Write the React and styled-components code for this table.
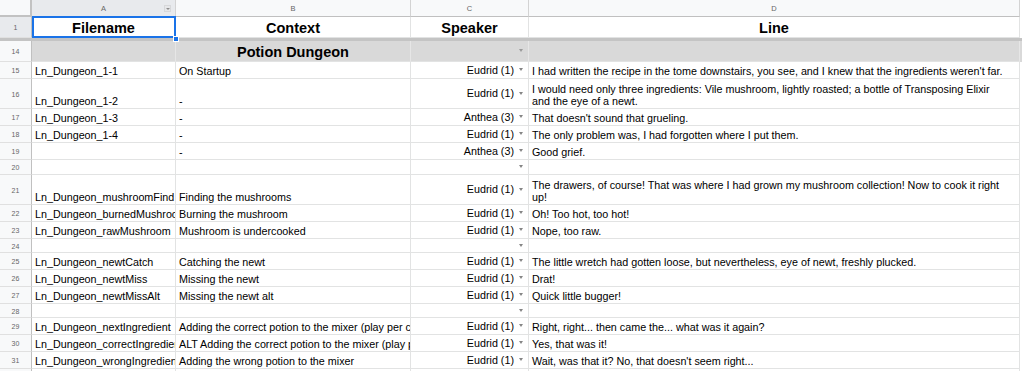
import React from 'react';
import styled, { createGlobalStyle } from 'styled-components';

const GlobalStyle = createGlobalStyle`
  html, body { margin: 0; padding: 0; background: #ffffff; }
  body {
    font-family: "Liberation Sans", Arial, sans-serif;
    overflow: hidden;
    width: 1022px;
    height: 371px;
  }
`;

const COLS = '32px 144px 235px 118px 491px';

const Sheet = styled.div`
  width: 1022px;
  display: flex;
  flex-direction: column;
`;

const Row = styled.div`
  display: grid;
  grid-template-columns: ${COLS};
  height: ${p => p.$h}px;
  flex: none;
  background: ${p => p.$bg || '#ffffff'};
`;

const Corner = styled.div`
  box-sizing: border-box;
  background: #f8f9fa;
  border-right: 2px solid #c2c2c2;
  border-bottom: 2px solid #c2c2c2;
`;

const ColHead = styled.div`
  box-sizing: border-box;
  position: relative;
  background: ${p => (p.$active ? '#e8eaed' : '#f8f9fa')};
  border-right: 1px solid #d3d3d3;
  border-bottom: 1px solid #c0c0c0;
  color: #666;
  font-size: 7.5px;
  display: flex;
  align-items: center;
  justify-content: center;
`;

const FilterBtn = styled.span`
  position: absolute;
  right: 4px;
  top: 5px;
  width: 7px;
  height: 7px;
  box-sizing: border-box;
  background: #e6e7e9;
  border: 1px solid #d7d8da;
  display: flex;
  align-items: center;
  justify-content: center;
  &::after {
    content: '';
    border-left: 2px solid transparent;
    border-right: 2px solid transparent;
    border-top: 2px solid #8d8d8d;
  }
`;

const RowNum = styled.div`
  box-sizing: border-box;
  background: ${p => (p.$active ? '#e8eaed' : '#f8f9fa')};
  border-right: 1px solid #c0c0c0;
  border-bottom: 1px solid #e0e0e0;
  color: #666;
  font-size: 7px;
  padding-top: 1px;
  display: flex;
  align-items: center;
  justify-content: center;
`;

const FreezeBar = styled.div`
  height: 3px;
  flex: none;
  background: #c4c4c4;
`;

const justify = { left: 'flex-start', center: 'center', right: 'flex-end' };

const Cell = styled.div`
  box-sizing: border-box;
  position: relative;
  min-width: 0;
  border-right: 1px solid ${p => p.$line || '#e2e3e3'};
  border-bottom: 1px solid #e2e3e3;
  padding: ${p => (p.$pad === 'speaker' ? '0 5px 1px 3px' : '0 3px 1px 3px')};
  display: flex;
  align-items: ${p => (p.$valign === 'middle' ? 'center' : 'flex-end')};
  justify-content: ${p => justify[p.$align || 'left']};
  font-size: ${p => (p.$big ? '14.5px' : '10.75px')};
  font-weight: ${p => (p.$big ? 700 : 400)};
  line-height: ${p => (p.$big ? '16px' : '12px')};
  color: #000;
  white-space: ${p => (p.$wrap ? 'normal' : 'nowrap')};
  overflow: ${p => (p.$selected ? 'visible' : 'hidden')};

  ${p =>
    p.$selected &&
    `
    &::after {
      content: '';
      position: absolute;
      left: 0;
      top: -1px;
      right: -1px;
      bottom: -1px;
      border: 2px solid #1a73e8;
      pointer-events: none;
      z-index: 2;
    }
  `}
`;

const Handle = styled.span`
  position: absolute;
  right: -4px;
  bottom: -5px;
  width: 6px;
  height: 6px;
  box-sizing: border-box;
  background: #1a73e8;
  border: 1px solid #ffffff;
  z-index: 3;
`;

const Speaker = styled.span`
  white-space: nowrap;
`;

const Arrow = styled.span`
  flex: none;
  width: 0;
  height: 0;
  margin-left: 5px;
  border-left: 2.5px solid transparent;
  border-right: 2.5px solid transparent;
  border-top: 3px solid ${p => (p.$light ? '#9a9a9a' : '#858585')};
`;

const rows = [
  { n: 15, h: 17, a: 'Ln_Dungeon_1-1', b: 'On Startup', c: 'Eudrid (1)', d: "I had written the recipe in the tome downstairs, you see, and I knew that the ingredients weren't far." },
  { n: 16, h: 30, a: 'Ln_Dungeon_1-2', b: '-', c: 'Eudrid (1)', d: ['I would need only three ingredients: Vile mushroom, lightly roasted; a bottle of Transposing Elixir', 'and the eye of a newt.'] },
  { n: 17, h: 17, a: 'Ln_Dungeon_1-3', b: '-', c: 'Anthea (3)', d: "That doesn't sound that grueling." },
  { n: 18, h: 17, a: 'Ln_Dungeon_1-4', b: '-', c: 'Eudrid (1)', d: 'The only problem was, I had forgotten where I put them.' },
  { n: 19, h: 17, a: '', b: '-', c: 'Anthea (3)', d: 'Good grief.' },
  { n: 20, h: 15, a: '', b: '', c: '', d: '' },
  { n: 21, h: 30, a: 'Ln_Dungeon_mushroomFind', b: 'Finding the mushrooms', c: 'Eudrid (1)', d: ['The drawers, of course! That was where I had grown my mushroom collection! Now to cook it right', 'up!'] },
  { n: 22, h: 17, a: 'Ln_Dungeon_burnedMushroom', b: 'Burning the mushroom', c: 'Eudrid (1)', d: 'Oh! Too hot, too hot!' },
  { n: 23, h: 17, a: 'Ln_Dungeon_rawMushroom', b: 'Mushroom is undercooked', c: 'Eudrid (1)', d: 'Nope, too raw.' },
  { n: 24, h: 14, a: '', b: '', c: '', d: '' },
  { n: 25, h: 17, a: 'Ln_Dungeon_newtCatch', b: 'Catching the newt', c: 'Eudrid (1)', d: 'The little wretch had gotten loose, but nevertheless, eye of newt, freshly plucked.' },
  { n: 26, h: 17, a: 'Ln_Dungeon_newtMiss', b: 'Missing the newt', c: 'Eudrid (1)', d: 'Drat!' },
  { n: 27, h: 17, a: 'Ln_Dungeon_newtMissAlt', b: 'Missing the newt alt', c: 'Eudrid (1)', d: 'Quick little bugger!' },
  { n: 28, h: 14, a: '', b: '', c: '', d: '' },
  { n: 29, h: 17, a: 'Ln_Dungeon_nextIngredient', b: 'Adding the correct potion to the mixer (play per call)', c: 'Eudrid (1)', d: 'Right, right... then came the... what was it again?' },
  { n: 30, h: 17, a: 'Ln_Dungeon_correctIngredient', b: 'ALT Adding the correct potion to the mixer (play per call)', c: 'Eudrid (1)', d: 'Yes, that was it!' },
  { n: 31, h: 17, a: 'Ln_Dungeon_wrongIngredient', b: 'Adding the wrong potion to the mixer', c: 'Eudrid (1)', d: "Wait, was that it? No, that doesn't seem right..." },
  { n: 32, h: 17, a: '', b: '', c: '', d: '', noArrow: true },
];

function LineText({ d }) {
  if (Array.isArray(d)) {
    return (
      <span>
        {d.map((l, i) => (
          <React.Fragment key={i}>
            {i > 0 && <br />}
            {l}
          </React.Fragment>
        ))}
      </span>
    );
  }
  return <span>{d}</span>;
}

export default function App() {
  return (
    <>
      <GlobalStyle />
      <Sheet>
        <Row $h={17}>
          <Corner />
          <ColHead $active>
            A
            <FilterBtn />
          </ColHead>
          <ColHead>B</ColHead>
          <ColHead>C</ColHead>
          <ColHead>D</ColHead>
        </Row>

        <Row $h={21}>
          <RowNum $active>1</RowNum>
          <Cell $big $align="center" $selected>
            Filename
            <Handle />
          </Cell>
          <Cell $big $align="center">Context</Cell>
          <Cell $big $align="center">Speaker</Cell>
          <Cell $big $align="center">Line</Cell>
        </Row>

        <FreezeBar />

        <Row $h={21} $bg="#d9d9d9">
          <RowNum>14</RowNum>
          <Cell $line="#e6e6e6" />
          <Cell $big $align="center" $line="#e6e6e6">Potion Dungeon</Cell>
          <Cell $align="right" $valign="middle" $pad="speaker" $line="#e6e6e6">
            <Arrow $light />
          </Cell>
          <Cell $line="#e6e6e6" />
        </Row>

        {rows.map(r => (
          <Row key={r.n} $h={r.h}>
            <RowNum>{r.n}</RowNum>
            <Cell>{r.a}</Cell>
            <Cell>{r.b}</Cell>
            <Cell $align="right" $valign="middle" $pad="speaker">
              {r.c && <Speaker>{r.c}</Speaker>}
              {!r.noArrow && <Arrow />}
            </Cell>
            <Cell $wrap={Array.isArray(r.d)}>
              <LineText d={r.d} />
            </Cell>
          </Row>
        ))}
      </Sheet>
    </>
  );
}
